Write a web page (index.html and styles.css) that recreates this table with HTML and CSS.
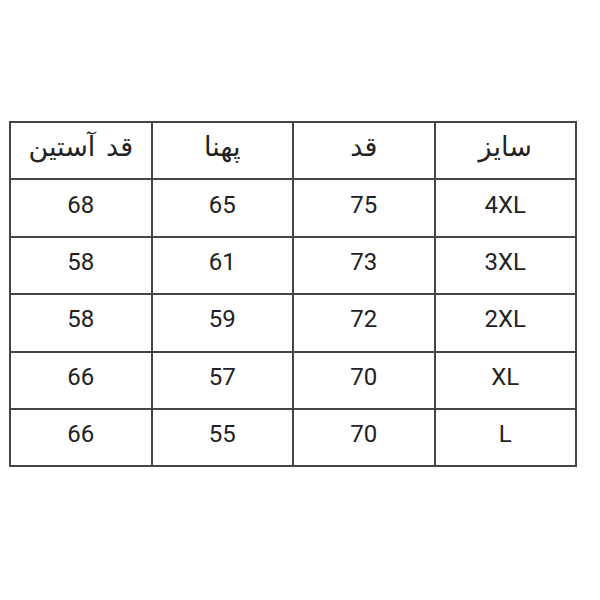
FILE: index.html
```html
<!DOCTYPE html>
<html lang="fa">
<head>
<meta charset="utf-8">
<link rel="stylesheet" href="styles.css">
</head>
<body>
<div class="page">
  <table class="sizes" dir="rtl">
    <tr class="head"><td>سایز</td><td>قد</td><td>پهنا</td><td>قد آستین</td></tr>
    <tr><td>4XL</td><td>75</td><td>65</td><td>68</td></tr>
    <tr><td>3XL</td><td>73</td><td>61</td><td>58</td></tr>
    <tr><td>2XL</td><td>72</td><td>59</td><td>58</td></tr>
    <tr><td>XL</td><td>70</td><td>57</td><td>66</td></tr>
    <tr><td>L</td><td>70</td><td>55</td><td>66</td></tr>
  </table>
</div>
</body>
</html>
```
FILE: styles.css
```css
html, body {
  margin: 0;
  padding: 0;
  background: #ffffff;
}
.page {
  width: 600px;
  height: 600px;
  padding-top: 121px;
  padding-left: 9px;
  box-sizing: border-box;
}
.sizes {
  width: 568px;
  border-collapse: collapse;
  table-layout: fixed;
  font-family: Roboto, "DejaVu Sans", sans-serif;
  font-size: 24px;
  color: #222222;
}
.sizes td {
  border: 2px solid #454545;
  height: 48.4px;
  padding: 0 0 7px 0;
  text-align: center;
  vertical-align: middle;
  line-height: 1;
}
.sizes .head td {
  font-size: 27px;
  word-spacing: 4px;
}
```
